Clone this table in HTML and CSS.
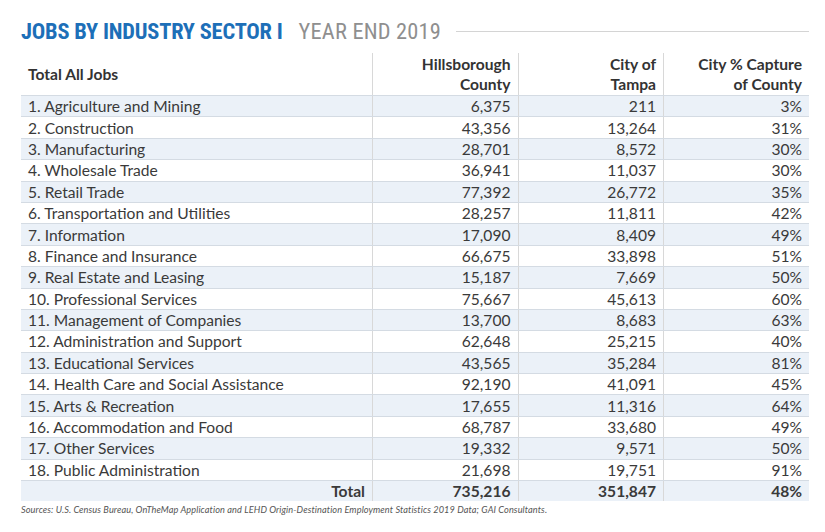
FILE: index.html
```html
<!DOCTYPE html>
<html>
<head>
<meta charset="utf-8">
<link rel="stylesheet" href="styles.css">
</head>
<body>
<div class="page">
  <div class="title-row">
    <h1 class="title"><span class="title-main">JOBS BY INDUSTRY SECTOR I</span> <span class="title-sub">YEAR END 2019</span></h1>
    <div class="title-rule"></div>
  </div>
  <table class="jobs">
    <thead>
      <tr>
        <th class="c-name">Total All Jobs</th>
        <th class="c-num">Hillsborough<br>County</th>
        <th class="c-num">City of<br>Tampa</th>
        <th class="c-num">City % Capture<br>of County</th>
      </tr>
    </thead>
    <tbody>
      <tr><td class="c-name">1. Agriculture and Mining</td><td class="c-num">6,375</td><td class="c-num">211</td><td class="c-num">3%</td></tr>
      <tr><td class="c-name">2. Construction</td><td class="c-num">43,356</td><td class="c-num">13,264</td><td class="c-num">31%</td></tr>
      <tr><td class="c-name">3. Manufacturing</td><td class="c-num">28,701</td><td class="c-num">8,572</td><td class="c-num">30%</td></tr>
      <tr><td class="c-name">4. Wholesale Trade</td><td class="c-num">36,941</td><td class="c-num">11,037</td><td class="c-num">30%</td></tr>
      <tr><td class="c-name">5. Retail Trade</td><td class="c-num">77,392</td><td class="c-num">26,772</td><td class="c-num">35%</td></tr>
      <tr><td class="c-name">6. Transportation and Utilities</td><td class="c-num">28,257</td><td class="c-num">11,811</td><td class="c-num">42%</td></tr>
      <tr><td class="c-name">7. Information</td><td class="c-num">17,090</td><td class="c-num">8,409</td><td class="c-num">49%</td></tr>
      <tr><td class="c-name">8. Finance and Insurance</td><td class="c-num">66,675</td><td class="c-num">33,898</td><td class="c-num">51%</td></tr>
      <tr><td class="c-name">9. Real Estate and Leasing</td><td class="c-num">15,187</td><td class="c-num">7,669</td><td class="c-num">50%</td></tr>
      <tr><td class="c-name">10. Professional Services</td><td class="c-num">75,667</td><td class="c-num">45,613</td><td class="c-num">60%</td></tr>
      <tr><td class="c-name">11. Management of Companies</td><td class="c-num">13,700</td><td class="c-num">8,683</td><td class="c-num">63%</td></tr>
      <tr><td class="c-name">12. Administration and Support</td><td class="c-num">62,648</td><td class="c-num">25,215</td><td class="c-num">40%</td></tr>
      <tr><td class="c-name">13. Educational Services</td><td class="c-num">43,565</td><td class="c-num">35,284</td><td class="c-num">81%</td></tr>
      <tr><td class="c-name">14. Health Care and Social Assistance</td><td class="c-num">92,190</td><td class="c-num">41,091</td><td class="c-num">45%</td></tr>
      <tr><td class="c-name">15. Arts &amp; Recreation</td><td class="c-num">17,655</td><td class="c-num">11,316</td><td class="c-num">64%</td></tr>
      <tr><td class="c-name">16. Accommodation and Food</td><td class="c-num">68,787</td><td class="c-num">33,680</td><td class="c-num">49%</td></tr>
      <tr><td class="c-name">17. Other Services</td><td class="c-num">19,332</td><td class="c-num">9,571</td><td class="c-num">50%</td></tr>
      <tr><td class="c-name">18. Public Administration</td><td class="c-num">21,698</td><td class="c-num">19,751</td><td class="c-num">91%</td></tr>
      <tr class="total"><td class="c-num">Total</td><td class="c-num">735,216</td><td class="c-num">351,847</td><td class="c-num">48%</td></tr>
    </tbody>
  </table>
  <p class="sources">Sources: U.S. Census Bureau, OnTheMap Application and LEHD Origin-Destination Employment Statistics 2019 Data; GAI Consultants.</p>
</div>
</body>
</html>
```
FILE: styles.css
```css
html, body {
  margin: 0;
  padding: 0;
  background: #ffffff;
}
.page {
  padding: 16px 16px 0 21px;
  font-family: Lato, "Open Sans", sans-serif;
  color: #333333;
}
.title-row {
  display: flex;
  align-items: center;
  gap: 15px;
  height: 30px;
}
.title {
  margin: 0;
  font-family: Roboto, sans-serif;
  font-stretch: condensed;
  font-size: 22.4px;
  line-height: 30px;
  font-weight: normal;
  white-space: nowrap;
  letter-spacing: -0.2px;
}
.title-main {
  font-weight: bold;
  color: #1d6fb8;
  margin-right: 11px;
}
.title-sub {
  font-weight: 400;
  color: #8f8f8f;
  letter-spacing: 0.2px;
}
.title-rule {
  flex: 1;
  height: 1px;
  background: #d4d4d4;
}
.jobs {
  border-collapse: collapse;
  width: 788px;
  margin-top: 7px;
  table-layout: fixed;
  font-size: 15.6px;
}
.jobs th, .jobs td {
  padding: 0 7px;
  white-space: nowrap;
}
.jobs th {
  font-size: 15.6px;
  font-weight: bold;
  line-height: 20px;
  height: 42px;
  color: #333333;
  border-bottom: 1px solid #d4dbe3;
}
.jobs th:first-child { width: 337px; }
.jobs td {
  height: 20.4px;
  line-height: 20px;
  border-bottom: 1px solid #d4dbe3;
  color: #3a3a3a;
}
.jobs th + th, .jobs td + td {
  border-left: 1px solid #d8d8d8;
}
.c-name { text-align: left; }
.c-num { text-align: right; }
.jobs tbody tr:nth-child(odd) { background: #ebf1f8; }
.jobs .total td {
  font-weight: bold;
  border-bottom: none;
}
.sources {
  margin: 3px 0 0 0;
  font-size: 9.2px;
  font-style: italic;
  color: #555555;
  letter-spacing: 0.1px;
}
```
